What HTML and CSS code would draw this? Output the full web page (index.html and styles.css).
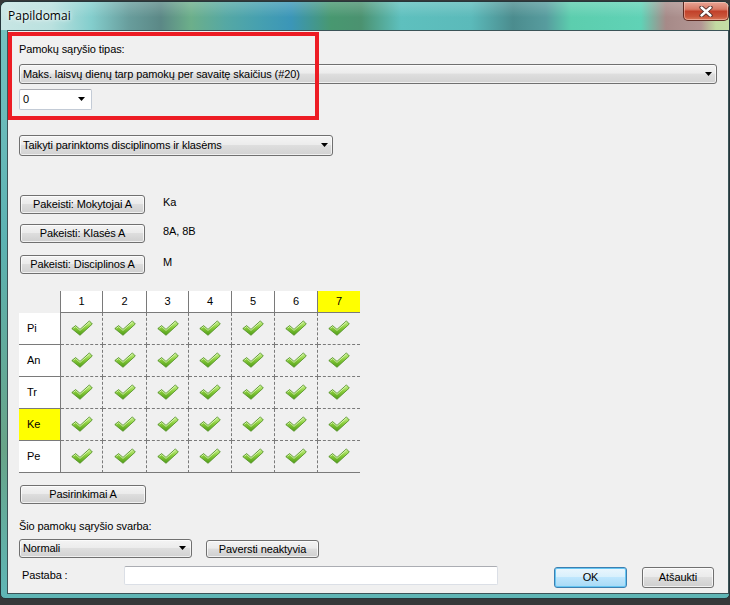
FILE: index.html
```html
<!DOCTYPE html>
<html lang="lt">
<head>
  <meta charset="UTF-8" />
  <meta name="viewport" content="width=device-width, initial-scale=1.0"/>
  <title>Papildomai</title>
  <link rel="stylesheet" href="styles.css">
</head>
<body>
  <svg class="defs" width="0" height="0">
    <defs>
      <linearGradient id="chkfill" x1="0" y1="0" x2="0" y2="1">
        <stop offset="0" stop-color="#c8f08c"/>
        <stop offset="0.45" stop-color="#8ccf3e"/>
        <stop offset="1" stop-color="#4f9c16"/>
      </linearGradient>
      <symbol id="chk" viewBox="0 0 22 16">
        <path d="M0.8 8.6 L4.6 5.6 L9 9.4 L18.4 0.9 L21.3 4 L9 15.3 Z" fill="url(#chkfill)" stroke="#4b8c1e" stroke-width="0.8" stroke-linejoin="round"/>
        <path d="M2.4 8.3 L4.6 6.6 L9 10.4 L18.4 2.1" fill="none" stroke="#f0ffd8" stroke-width="0.9" opacity="0.75"/>
      </symbol>
      <symbol id="arrow" viewBox="0 0 7 4">
        <path d="M0 0 H7 L3.5 4 Z" fill="#000"/>
      </symbol>
    </defs>
  </svg>

  <div class="window">
    <div class="titlebar">
      <span class="title">Papildomai</span>
      <button class="close">
        <svg width="14" height="11" viewBox="0 0 14 11">
          <path d="M2.5 1.5 L11.5 9.5 M11.5 1.5 L2.5 9.5" stroke="#4a2a26" stroke-width="4.2" stroke-linecap="round"/>
          <path d="M2.5 1.5 L11.5 9.5 M11.5 1.5 L2.5 9.5" stroke="#ffffff" stroke-width="2.4" stroke-linecap="round"/>
        </svg>
      </button>
    </div>

    <div class="client">
      <div class="mark"></div>

      <div class="label type-label">Pamokų sąryšio tipas:</div>
      <div class="combo type-combo">
        <span>Maks. laisvų dienų tarp pamokų per savaitę skaičius (#20)</span>
        <svg class="arrow"><use href="#arrow"/></svg>
      </div>
      <div class="combo edit count-combo">
        <span>0</span>
        <svg class="arrow"><use href="#arrow"/></svg>
      </div>

      <div class="combo apply-combo">
        <span>Taikyti parinktoms disciplinoms ir klasėms</span>
        <svg class="arrow"><use href="#arrow"/></svg>
      </div>

      <div class="pick-row r1">
        <button class="btn pick">Pakeisti: Mokytojai A</button>
        <span class="value">Ka</span>
      </div>
      <div class="pick-row r2">
        <button class="btn pick">Pakeisti: Klasės A</button>
        <span class="value">8A, 8B</span>
      </div>
      <div class="pick-row r3">
        <button class="btn pick">Pakeisti: Disciplinos A</button>
        <span class="value">M</span>
      </div>

      <div class="grid">
        <div class="corner"></div>
        <div class="colhead">1</div>
        <div class="colhead">2</div>
        <div class="colhead">3</div>
        <div class="colhead">4</div>
        <div class="colhead">5</div>
        <div class="colhead">6</div>
        <div class="colhead hl">7</div>

        <div class="rowhead">Pi</div>
        <div class="cell"><svg class="chk"><use href="#chk"/></svg></div>
        <div class="cell"><svg class="chk"><use href="#chk"/></svg></div>
        <div class="cell"><svg class="chk"><use href="#chk"/></svg></div>
        <div class="cell"><svg class="chk"><use href="#chk"/></svg></div>
        <div class="cell"><svg class="chk"><use href="#chk"/></svg></div>
        <div class="cell"><svg class="chk"><use href="#chk"/></svg></div>
        <div class="cell"><svg class="chk"><use href="#chk"/></svg></div>

        <div class="rowhead">An</div>
        <div class="cell"><svg class="chk"><use href="#chk"/></svg></div>
        <div class="cell"><svg class="chk"><use href="#chk"/></svg></div>
        <div class="cell"><svg class="chk"><use href="#chk"/></svg></div>
        <div class="cell"><svg class="chk"><use href="#chk"/></svg></div>
        <div class="cell"><svg class="chk"><use href="#chk"/></svg></div>
        <div class="cell"><svg class="chk"><use href="#chk"/></svg></div>
        <div class="cell"><svg class="chk"><use href="#chk"/></svg></div>

        <div class="rowhead">Tr</div>
        <div class="cell"><svg class="chk"><use href="#chk"/></svg></div>
        <div class="cell"><svg class="chk"><use href="#chk"/></svg></div>
        <div class="cell"><svg class="chk"><use href="#chk"/></svg></div>
        <div class="cell"><svg class="chk"><use href="#chk"/></svg></div>
        <div class="cell"><svg class="chk"><use href="#chk"/></svg></div>
        <div class="cell"><svg class="chk"><use href="#chk"/></svg></div>
        <div class="cell"><svg class="chk"><use href="#chk"/></svg></div>

        <div class="rowhead hl">Ke</div>
        <div class="cell"><svg class="chk"><use href="#chk"/></svg></div>
        <div class="cell"><svg class="chk"><use href="#chk"/></svg></div>
        <div class="cell"><svg class="chk"><use href="#chk"/></svg></div>
        <div class="cell"><svg class="chk"><use href="#chk"/></svg></div>
        <div class="cell"><svg class="chk"><use href="#chk"/></svg></div>
        <div class="cell"><svg class="chk"><use href="#chk"/></svg></div>
        <div class="cell"><svg class="chk"><use href="#chk"/></svg></div>

        <div class="rowhead">Pe</div>
        <div class="cell"><svg class="chk"><use href="#chk"/></svg></div>
        <div class="cell"><svg class="chk"><use href="#chk"/></svg></div>
        <div class="cell"><svg class="chk"><use href="#chk"/></svg></div>
        <div class="cell"><svg class="chk"><use href="#chk"/></svg></div>
        <div class="cell"><svg class="chk"><use href="#chk"/></svg></div>
        <div class="cell"><svg class="chk"><use href="#chk"/></svg></div>
        <div class="cell"><svg class="chk"><use href="#chk"/></svg></div>
      </div>

      <button class="btn pick options">Pasirinkimai A</button>

      <div class="label weight-label">Šio pamokų sąryšio svarba:</div>
      <div class="weight-row">
        <div class="combo weight-combo">
          <span>Normali</span>
          <svg class="arrow"><use href="#arrow"/></svg>
        </div>
        <button class="btn deactivate">Paversti neaktyvia</button>
      </div>

      <div class="footer">
        <span class="note-label">Pastaba :</span>
        <input class="note" type="text">
        <button class="btn ok">OK</button>
        <button class="btn cancel">Atšaukti</button>
      </div>
    </div>
  </div>
</body>
</html>
```

FILE: styles.css
```css
:root {
  --dialog: #f0f0f0;
  --line: #7a7a7a;
  --btn-border: #707070;
  --mark: #ed1c24;
}

* {
  box-sizing: border-box;
}

body {
  margin: 0;
  background: #363839;
  font-family: "Liberation Sans", Arial, sans-serif;
  font-size: 11px;
  letter-spacing: -0.1px;
  color: #000;
}

.defs {
  position: absolute;
}

/* window frame */

.window {
  margin-top: 1px;
  width: 730px;
  height: 598px;
  border: 1px solid #26363a;
  border-radius: 7px 7px 5px 5px;
  background: linear-gradient(#78c4c2, #5cb2b2 40%, #68a488 75%, #5fb6b6);
  overflow: hidden;
}

.titlebar {
  height: 28px;
  display: flex;
  align-items: flex-start;
  background:
    linear-gradient(rgba(255,255,255,0.2), rgba(255,255,255,0) 55%),
    linear-gradient(to right,
      #c8e6e4 0px, #bae1df 50px, #84cecd 90px, #689d9c 128px, #5b8886 160px,
      #6caf8a 190px, #55a8a4 225px, #46a0b0 258px, #3b96b8 290px, #489870 330px,
      #4b9270 360px, #5ec0be 400px, #5bbaba 470px, #4b8c8e 512px, #579c9e 545px,
      #5cceae 570px, #60d2b6 640px, #a68a88 665px, #b39694 700px, #c2daa2 715px,
      #c6dea6 730px);
}

.title {
  padding: 6px 0 0 7px;
  font-family: "Open Sans", "Noto Sans", sans-serif;
  font-size: 12px;
  letter-spacing: 0;
  line-height: 16px;
  text-shadow: 0 0 6px rgba(255,255,255,0.9), 0 0 3px rgba(255,255,255,0.9);
}

.close {
  margin-left: auto;
  width: 46px;
  height: 19px;
  padding: 0;
  border: 1px solid #5e2a22;
  border-top: 0;
  border-radius: 0 0 5px 5px;
  background: linear-gradient(#e8a596 0%, #d87a66 40%, #c2412a 52%, #c9553a 80%, #d97a5c 100%);
  box-shadow: inset 0 0 0 1px rgba(255,220,210,0.45);
  display: flex;
  align-items: center;
  justify-content: center;
}

.client {
  position: relative;
  margin-left: 6px;
  width: 722px;
  height: 564px;
  border: 1px solid #3b5357;
  background: var(--dialog);
  padding-left: 11px;
}

/* red annotation frame */
.mark {
  position: absolute;
  left: 0;
  top: 1px;
  width: 311px;
  height: 88px;
  border: 4px solid var(--mark);
}

.label {
  line-height: 13px;
  white-space: nowrap;
}

.type-label {
  padding-top: 12px;
}

/* combo boxes */

.combo {
  display: flex;
  align-items: center;
  padding: 0 0 1px 3px;
  border: 1px solid var(--btn-border);
  border-radius: 3px;
  background: linear-gradient(#f4f4f4 0%, #ececec 45%, #dedede 50%, #d2d2d2 100%);
  box-shadow: inset 0 0 0 1px rgba(255,255,255,0.65);
  white-space: nowrap;
}

.combo .arrow {
  width: 7px;
  height: 4px;
  margin-left: auto;
  margin-right: 4px;
}

.combo.edit {
  background: #fff;
  border-color: #c3cbd6;
  border-top-color: #abadb3;
  border-radius: 2px;
  box-shadow: none;
}

.type-combo {
  margin-top: 8px;
  width: 698px;
  height: 20px;
}

.count-combo {
  margin-top: 5px;
  width: 73px;
  height: 21px;
}

.count-combo .arrow {
  margin-right: 6px;
}

.apply-combo {
  margin-top: 25px;
  width: 314px;
  height: 21px;
}

/* buttons */

.btn {
  height: 19px;
  padding: 0 0 1px;
  border: 1px solid var(--btn-border);
  border-radius: 3px;
  background: linear-gradient(#f3f3f3 0%, #ebebeb 45%, #dddddd 50%, #cfcfcf 100%);
  box-shadow: inset 0 0 0 1px rgba(255,255,255,0.7);
  font: inherit;
  letter-spacing: inherit;
  color: #000;
  text-align: center;
  white-space: nowrap;
}

.pick-row {
  display: flex;
  align-items: flex-start;
  height: 19px;
}

.pick-row.r1 { margin-top: 39px; }
.pick-row.r2 { margin-top: 10px; }
.pick-row.r3 { margin-top: 12px; }

.pick {
  margin-left: 1px;
  width: 125px;
}

.value {
  margin-left: 18px;
  line-height: 14px;
}

/* lesson grid */

.grid {
  margin-top: 17px;
  display: grid;
  grid-template-columns: 42px 42px 44px 42px 43px 43px 43px 42px;
  grid-template-rows: 22px repeat(5, 32px);
  width: 341px;
}

.corner {
  border-right: 1px solid var(--line);
}

.colhead {
  background: #fff;
  border-right: 1px solid var(--line);
  border-bottom: 1px solid var(--line);
  display: flex;
  align-items: center;
  justify-content: center;
  padding-bottom: 1px;
}

.colhead.hl {
  background: #ffff00;
  border-right: 0;
}

.rowhead {
  background: #fff;
  border-right: 1px solid var(--line);
  border-bottom: 1px solid var(--line);
  display: flex;
  align-items: center;
  padding: 0 0 1px 8px;
}

.rowhead.hl {
  background: #ffff00;
}

.cell {
  border-right: 1px dashed var(--line);
  border-bottom: 1px dashed var(--line);
  display: flex;
  align-items: center;
  justify-content: center;
  padding-bottom: 2px;
}

.grid > .cell:nth-child(8n) {
  border-right: 0;
}

.grid > :nth-child(n+41) {
  border-bottom-style: solid;
}

.chk {
  width: 22px;
  height: 16px;
}

.options {
  display: block;
  margin-top: 12px;
  width: 126px;
}

.weight-label {
  margin-top: 16px;
}

.weight-row {
  margin-top: 6px;
  display: flex;
  align-items: flex-start;
  height: 19px;
}

.weight-combo {
  width: 173px;
  height: 19px;
}

.weight-combo .arrow {
  margin-right: 5px;
}

.deactivate {
  margin: 1px 0 0 14px;
  width: 113px;
  height: 18px;
}

/* footer */

.footer {
  margin-top: 8px;
  display: flex;
  align-items: flex-start;
  height: 21px;
}

.note-label {
  width: 105px;
  padding: 3px 0 0 3px;
  line-height: 13px;
}

.note {
  width: 374px;
  height: 19px;
  border: 1px solid #dbdfe6;
  border-top-color: #abadb3;
  border-radius: 2px;
  background: #fff;
  font: inherit;
}

.ok {
  margin: 1px 0 0 56px;
  width: 73px;
  height: 21px;
  border-color: #3c7fb1;
  background: linear-gradient(#ebf6fd 0%, #d9f0fc 45%, #bee6fd 50%, #a7d9f5 100%);
  box-shadow: inset 0 0 0 1px #66c6f2;
}

.cancel {
  margin: 1px 0 0 15px;
  width: 72px;
  height: 21px;
}
```
